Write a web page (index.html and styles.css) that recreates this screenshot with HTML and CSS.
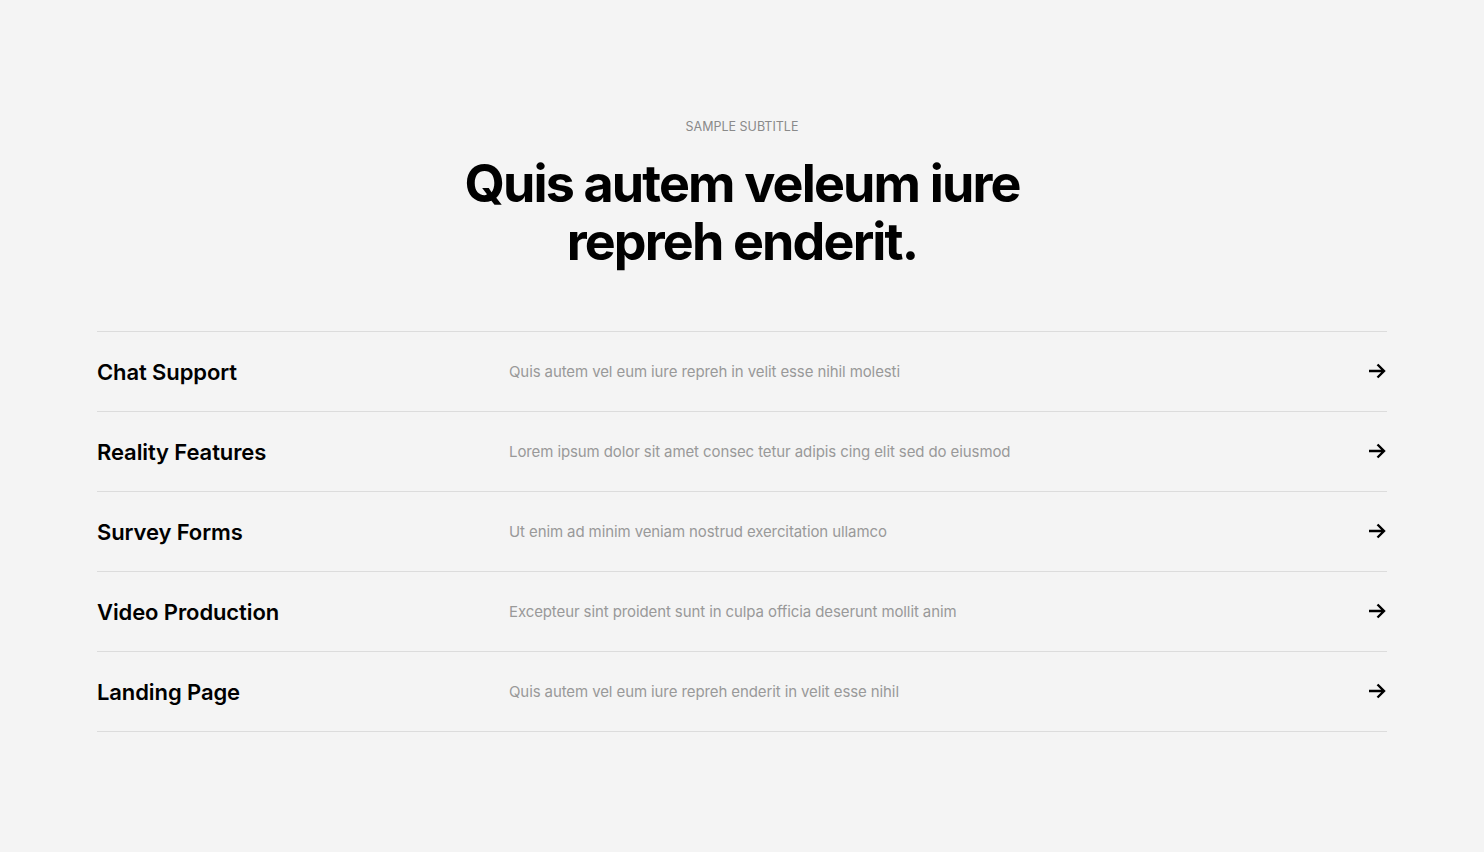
FILE: index.html
```html
<!DOCTYPE html>
<html lang="en">
<head>
<meta charset="utf-8">
<title>Services</title>
<link rel="stylesheet" href="styles.css">
</head>
<body>
<section class="services">
  <header class="services-head">
    <p class="subtitle">SAMPLE SUBTITLE</p>
    <h1 class="title">Quis autem veleum iure<br>repreh enderit.</h1>
  </header>
  <ul class="list">
    <li class="row">
      <h3 class="row-title">Chat Support</h3>
      <p class="row-desc">Quis autem vel eum iure repreh in velit esse nihil molesti</p>
      <svg class="arrow" viewBox="0 0 20 20" width="20" height="20"><path d="M2 10h15M10.5 3.5 17 10l-6.5 6.5" fill="none" stroke="#000" stroke-width="2.4"/></svg>
    </li>
    <li class="row">
      <h3 class="row-title">Reality Features</h3>
      <p class="row-desc">Lorem ipsum dolor sit amet consec tetur adipis cing elit sed do eiusmod</p>
      <svg class="arrow" viewBox="0 0 20 20" width="20" height="20"><path d="M2 10h15M10.5 3.5 17 10l-6.5 6.5" fill="none" stroke="#000" stroke-width="2.4"/></svg>
    </li>
    <li class="row">
      <h3 class="row-title">Survey Forms</h3>
      <p class="row-desc">Ut enim ad minim veniam nostrud exercitation ullamco</p>
      <svg class="arrow" viewBox="0 0 20 20" width="20" height="20"><path d="M2 10h15M10.5 3.5 17 10l-6.5 6.5" fill="none" stroke="#000" stroke-width="2.4"/></svg>
    </li>
    <li class="row">
      <h3 class="row-title">Video Production</h3>
      <p class="row-desc">Excepteur sint proident sunt in culpa officia deserunt mollit anim</p>
      <svg class="arrow" viewBox="0 0 20 20" width="20" height="20"><path d="M2 10h15M10.5 3.5 17 10l-6.5 6.5" fill="none" stroke="#000" stroke-width="2.4"/></svg>
    </li>
    <li class="row">
      <h3 class="row-title">Landing Page</h3>
      <p class="row-desc">Quis autem vel eum iure repreh enderit in velit esse nihil</p>
      <svg class="arrow" viewBox="0 0 20 20" width="20" height="20"><path d="M2 10h15M10.5 3.5 17 10l-6.5 6.5" fill="none" stroke="#000" stroke-width="2.4"/></svg>
    </li>
  </ul>
</section>
</body>
</html>
```
FILE: styles.css
```css
* { box-sizing: border-box; }
html, body {
  margin: 0;
  padding: 0;
  background: #f4f4f4;
  font-family: Inter, "Noto Sans", sans-serif;
  color: #000;
}
.services {
  padding: 119px 97px 0;
}
.services-head {
  text-align: center;
}
.subtitle {
  margin: 0;
  font-size: 12.5px;
  line-height: 16px;
  color: #8a8a8a;
  letter-spacing: 0;
}
.title {
  margin: 20px 0 0;
  font-size: 52px;
  line-height: 58px;
  font-weight: 700;
  letter-spacing: -1.85px;
}
.list {
  list-style: none;
  margin: 60px 0 0;
  padding: 0;
  border-top: 1px solid #dcdcdc;
}
.row {
  display: grid;
  grid-template-columns: 412px 1fr 20px;
  align-items: center;
  height: 80px;
  border-bottom: 1px solid #dcdcdc;
}
.row-title {
  margin: 0;
  font-size: 22px;
  font-weight: 600;
  letter-spacing: -0.1px;
}
.row-desc {
  margin: 0;
  font-size: 15px;
  color: #999;
  letter-spacing: -0.1px;
}
.arrow {
  display: block;
  margin-top: -2px;
}
```
